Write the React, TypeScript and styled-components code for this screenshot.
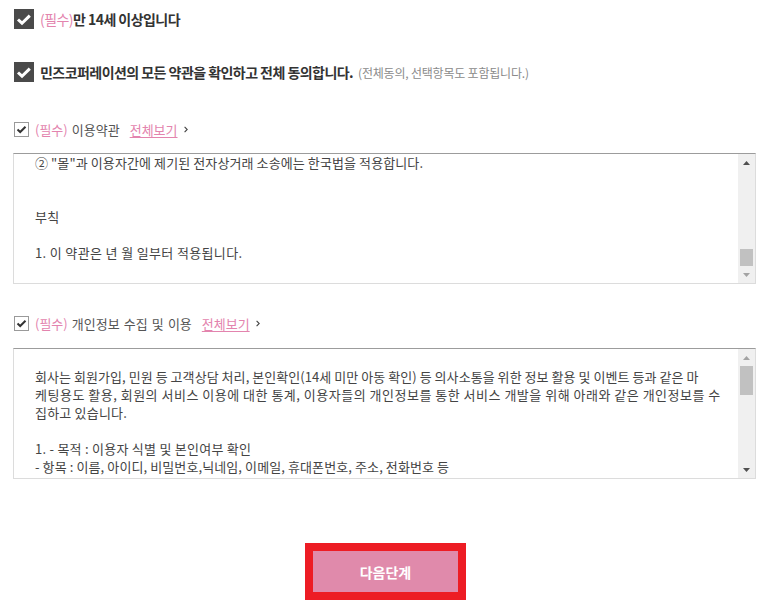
import React from "react";
import styled, { createGlobalStyle } from "styled-components";

const Global = createGlobalStyle`
  html, body { margin: 0; padding: 0; background: #fff; }
  body { font-family: "Noto Sans CJK KR", "Noto Sans", sans-serif; color: #444; }
`;

const Page = styled.div`
  width: 771px;
  display: flex;
  flex-direction: column;
`;

const Section = styled.div`
  margin-left: 13px;
  width: 743px;
  display: flex;
  flex-direction: column;
`;

const AgreeRow = styled.div<{ $top: number }>`
  display: flex;
  align-items: center;
  height: 20px;
  margin-top: ${(p) => p.$top}px;
  padding-left: 1px;
  gap: 6px;
  font-size: 14px;
  font-weight: 700;
  color: #333;
  letter-spacing: -0.55px;
  white-space: nowrap;
`;

const BigCheck = styled.span`
  width: 20px;
  height: 20px;
  background: #4a4a4a;
  display: inline-flex;
  flex: none;
`;

const Pink = styled.span`
  color: #e384ae;
  font-weight: 400;
`;

const Note = styled.span`
  font-size: 12px;
  font-weight: 400;
  color: #8a8a8a;
  margin-left: 5px;
  letter-spacing: -0.2px;
`;

const TermRow = styled.div<{ $top: number }>`
  display: flex;
  align-items: center;
  height: 15px;
  margin-top: ${(p) => p.$top}px;
  padding-left: 1px;
  font-size: 13px;
  color: #555;
  word-spacing: 1.2px;
  white-space: nowrap;
`;

const SmallCheck = styled.span`
  width: 13px;
  height: 13px;
  border: 1px solid #9a9a9a;
  background: #fff;
  display: inline-flex;
  flex: none;
  margin-right: 6px;
`;

const ViewAll = styled.a`
  color: #e384ae;
  text-decoration: underline;
  text-underline-offset: 2px;
  margin-left: 10px;
  margin-right: 6px;
  cursor: pointer;
`;

const ScrollBox = styled.div<{ $top: number }>`
  margin-top: ${(p) => p.$top}px;
  height: 129px;
  border: 1px solid #dcdcdc;
  border-top-color: #9c9c9c;
  display: flex;
  overflow: hidden;
`;

const Content = styled.div<{ $padTop: number }>`
  flex: 1;
  padding: ${(p) => p.$padTop}px 0 0 21px;
  font-size: 13px;
  line-height: 18px;
  color: #444;
  overflow: hidden;
`;

const Line = styled.div<{ $ls?: number }>`
  height: 18px;
  white-space: pre;
  letter-spacing: ${(p) => p.$ls ?? 0.2}px;
`;

const ScrollTrack = styled.div`
  width: 17px;
  flex: none;
  background: #f0f0f0;
  display: flex;
  flex-direction: column;
`;

const ArrowBtn = styled.div`
  height: 17px;
  display: flex;
  align-items: center;
  justify-content: center;
  flex: none;
`;

const Rail = styled.div`
  flex: 1;
  display: flex;
  flex-direction: column;
`;

const Thumb = styled.div<{ $h: number }>`
  height: ${(p) => p.$h}px;
  margin: 0 2px;
  background: #c1c1c1;
  flex: none;
`;

const Spacer = styled.div`
  flex: 1;
`;

const ButtonWrap = styled.div`
  display: flex;
  justify-content: center;
  margin-top: 64px;
`;

const NextButton = styled.button`
  width: 161px;
  height: 57px;
  border: 8px solid #ed1c24;
  background: #e08aab;
  color: #fff;
  font-family: "Noto Sans CJK KR", sans-serif;
  font-size: 14px;
  font-weight: 700;
  padding: 0;
  cursor: pointer;
`;

const CheckMark = ({ big }: { big?: boolean }) =>
  big ? (
    <svg width="20" height="20" viewBox="0 0 20 20">
      <path d="M4 10.5 L8 14.2 L15.8 6.6" fill="none" stroke="#fff" strokeWidth="3" />
    </svg>
  ) : (
    <svg width="13" height="13" viewBox="0 0 13 13">
      <path d="M2.5 6.5 L5.2 9 L10.5 3.8" fill="none" stroke="#333" strokeWidth="2" />
    </svg>
  );

const Chevron = () => (
  <svg width="4" height="7" viewBox="0 0 4 7">
    <path d="M0.6 0.8 L3.2 3.5 L0.6 6.2" fill="none" stroke="#444" strokeWidth="1.1" />
  </svg>
);

const Arrow = ({ up, dark }: { up?: boolean; dark?: boolean }) => (
  <svg width="7" height="4" viewBox="0 0 7 4">
    <path d={up ? "M0 4 L3.5 0 L7 4 Z" : "M0 0 L7 0 L3.5 4 Z"} fill={dark ? "#505050" : "#a3a3a3"} />
  </svg>
);

const Scrollbar = ({ thumbTop, thumbH, atTop }: { thumbTop: number; thumbH: number; atTop: boolean }) => (
  <ScrollTrack>
    <ArrowBtn>
      <Arrow up dark={!atTop} />
    </ArrowBtn>
    <Rail>
      <div style={{ height: thumbTop }} />
      <Thumb $h={thumbH} />
      <Spacer />
    </Rail>
    <ArrowBtn>
      <Arrow dark={atTop} />
    </ArrowBtn>
  </ScrollTrack>
);

type TextLine = { t: string; ls?: number };

const terms: TextLine[] = [
  { t: '② "몰"과 이용자간에 제기된 전자상거래 소송에는 한국법을 적용합니다.', ls: 0.1 },
  { t: "" },
  { t: "" },
  { t: "부칙" },
  { t: "" },
  { t: "1. 이 약관은 년 월 일부터 적용됩니다.", ls: 0.35 },
  { t: "" },
];

const privacy: TextLine[] = [
  { t: "회사는 회원가입, 민원 등 고객상담 처리, 본인확인(14세 미만 아동 확인) 등 의사소통을 위한 정보 활용 및 이벤트 등과 같은 마", ls: 0.05 },
  { t: "케팅용도 활용, 회원의 서비스 이용에 대한 통계, 이용자들의 개인정보를 통한 서비스 개발을 위해 아래와 같은 개인정보를 수", ls: 0.5 },
  { t: "집하고 있습니다." },
  { t: "" },
  { t: "1. - 목적 : 이용자 식별 및 본인여부 확인", ls: 0.25 },
  { t: "- 항목 : 이름, 아이디, 비밀번호,닉네임, 이메일, 휴대폰번호, 주소, 전화번호 등", ls: 0.1 },
];

export default function App() {
  return (
    <Page>
      <Global />
      <Section>
        <AgreeRow $top={9}>
          <BigCheck>
            <CheckMark big />
          </BigCheck>
          <span>
            <Pink>(필수)</Pink>만 14세 이상입니다
          </span>
        </AgreeRow>
        <AgreeRow $top={33}>
          <BigCheck>
            <CheckMark big />
          </BigCheck>
          <span>
            민즈코퍼레이션의 모든 약관을 확인하고 전체 동의합니다.
            <Note>(전체동의, 선택항목도 포함됩니다.)</Note>
          </span>
        </AgreeRow>

        <TermRow $top={40}>
          <SmallCheck>
            <CheckMark />
          </SmallCheck>
          <Pink>(필수)</Pink>&nbsp;이용약관
          <ViewAll>전체보기</ViewAll>
          <Chevron />
        </TermRow>
        <ScrollBox $top={16}>
          <Content $padTop={0}>
            {terms.map((l, i) => (
              <Line key={i} $ls={l.ls}>
                {l.t}
              </Line>
            ))}
          </Content>
          <Scrollbar thumbTop={78} thumbH={17} atTop={false} />
        </ScrollBox>

        <TermRow $top={32}>
          <SmallCheck>
            <CheckMark />
          </SmallCheck>
          <Pink>(필수)</Pink>&nbsp;개인정보 수집 및 이용
          <ViewAll>전체보기</ViewAll>
          <Chevron />
        </TermRow>
        <ScrollBox $top={17}>
          <Content $padTop={19}>
            {privacy.map((l, i) => (
              <Line key={i} $ls={l.ls}>
                {l.t}
              </Line>
            ))}
          </Content>
          <Scrollbar thumbTop={0} thumbH={29} atTop />
        </ScrollBox>
      </Section>
      <ButtonWrap>
        <NextButton>다음단계</NextButton>
      </ButtonWrap>
    </Page>
  );
}
